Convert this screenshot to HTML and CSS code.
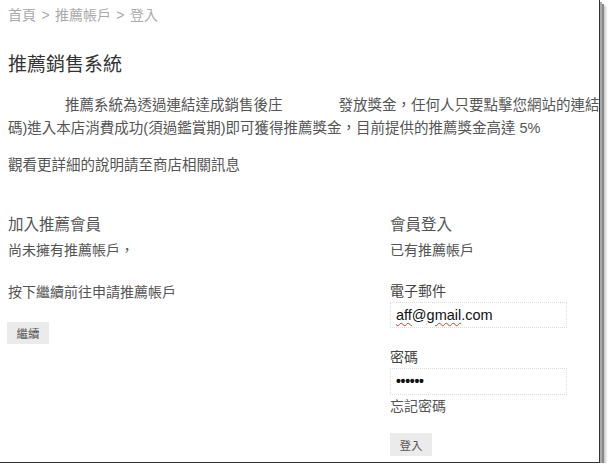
FILE: index.html
```html
<!DOCTYPE html>
<html lang="zh-Hant">
<head>
    <meta charset="UTF-8">
    <meta name="viewport" content="width=device-width, initial-scale=1.0">
    <title>推薦銷售系統 - 登入</title>
    <link rel="stylesheet" href="styles.css">
</head>
<body>
<div class="page">
    <div class="crumb">首頁 &gt; 推薦帳戶 &gt; 登入</div>

    <h1>推薦銷售系統</h1>

    <p class="intro"><span class="blank blank-a"></span>推薦系統為透過連結達成銷售後庄<span class="blank blank-b"></span>發放獎金，任何人只要點擊您網站的連結<br>碼)進入本店消費成功(須過鑑賞期)即可獲得推薦獎金，目前提供的推薦獎金高達 5%</p>

    <p class="more">觀看更詳細的說明請至商店相關訊息</p>

    <div class="columns">
        <div class="col">
            <h2>加入推薦會員</h2>
            <p class="note">尚未擁有推薦帳戶，</p>
            <p class="note next">按下繼續前往申請推薦帳戶</p>
            <button class="btn btn-join">繼續</button>
        </div>

        <form class="col login">
            <h2>會員登入</h2>
            <p class="note">已有推薦帳戶</p>
            <label class="label label-mail">電子郵件</label>
            <div class="field"><span class="typo">aff</span>@<span class="typo">gmail</span>.com</div>
            <label class="label label-pass">密碼</label>
            <div class="field field-pass">••••••</div>
            <a class="forgot">忘記密碼</a>
            <button class="btn btn-login" type="button">登入</button>
        </form>
    </div>
</div>
</body>
</html>
```

FILE: styles.css
```css
body {
    margin: 0;
    padding: 0;
    background-color: #fff;
    font-family: "Liberation Sans", "Noto Sans CJK TC", sans-serif;
    color: #555;
}

.page {
    box-sizing: border-box;
    width: 600px;
    height: 463px;
    padding-left: 8px;
    overflow: hidden;
    background-color: #fff;
    border-right: 1px solid #333;
    border-bottom: 1px solid #333;
    box-shadow: 2px 2px 0 #aaa, 4px 4px 0 #888, 6px 6px 2px #ccc;
}

.crumb {
    padding-top: 5px;
    line-height: 20px;
    font-size: 14px;
    word-spacing: 1.5px;
    color: #aaa;
}

h1 {
    margin: 28px 0 0;
    line-height: 24px;
    font-size: 19px;
    font-weight: normal;
    color: #333;
}

.intro {
    margin: 17px 0 0;
    line-height: 23px;
    font-size: 14.5px;
    white-space: nowrap;
}

.blank {
    display: inline-block;
}

.blank-a {
    width: 57px;
}

.blank-b {
    width: 56px;
}

.more {
    margin: 14px 0 0;
    line-height: 23px;
    font-size: 14.5px;
}

.columns {
    display: grid;
    grid-template-columns: 382px 1fr;
    margin-top: 37px;
}

.col {
    display: flex;
    flex-direction: column;
    align-items: flex-start;
    margin: 0;
}

h2 {
    margin: 0;
    line-height: 22px;
    font-size: 15.5px;
    font-weight: normal;
    color: #555;
}

.note {
    margin: 4px 0 0;
    line-height: 20px;
    font-size: 14px;
}

.note.next {
    margin-top: 22px;
}

.btn {
    height: 22px;
    width: 42px;
    padding: 0;
    border: none;
    background-color: #ebebeb;
    font-family: inherit;
    font-size: 11.5px;
    color: #555;
    cursor: pointer;
}

.btn-join {
    margin-top: 20px;
    margin-left: -1px;
}

.label {
    line-height: 20px;
    font-size: 14px;
    color: #444;
}

.label-mail {
    margin-top: 21px;
}

.label-pass {
    margin-top: 19px;
}

.field {
    box-sizing: border-box;
    width: 177px;
    height: 26px;
    margin-top: 1px;
    padding-left: 5px;
    border: 1px dotted #ddd;
    line-height: 24px;
    font-size: 14.5px;
    color: #111;
}

.field-pass {
    height: 27px;
    font-size: 14px;
    font-weight: bold;
    letter-spacing: -0.3px;
}

.typo {
    text-decoration: underline wavy #e03030;
    text-decoration-thickness: 1px;
    text-underline-offset: 2px;
}

.forgot {
    margin-top: 1px;
    line-height: 20px;
    font-size: 14px;
    color: #555;
}

.btn-login {
    margin-top: 17px;
    height: 23px;
}
```
